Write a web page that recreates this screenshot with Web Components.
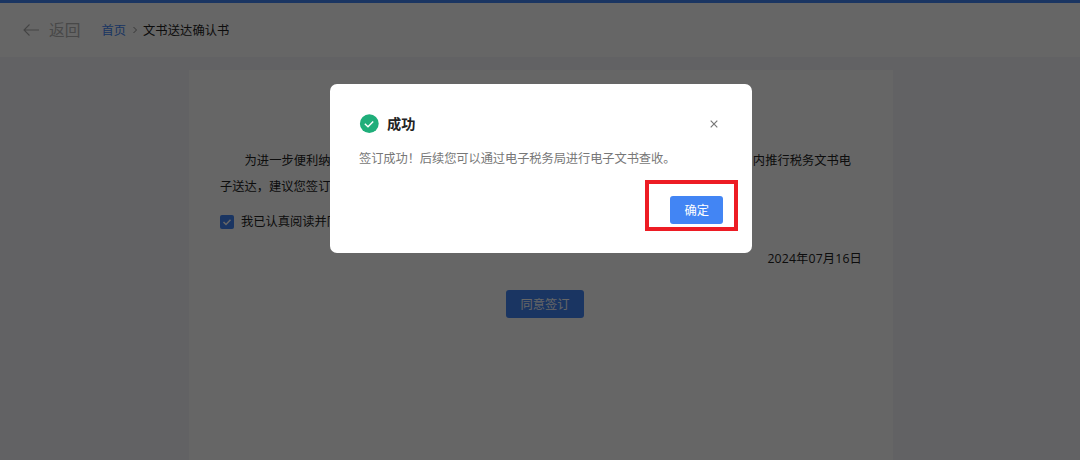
<!DOCTYPE html>
<html lang="zh-CN">
<head>
<meta charset="utf-8">
<title>文书送达确认书</title>
<style>
  body {
    margin: 0;
    height: 460px;
    overflow: hidden;
    background: #f4f5fa;
    color: #222;
    font-family: "Open Sans", "Noto Sans CJK SC", sans-serif;
    font-size: 12.27px;
  }
</style>
</head>
<body>
<confirm-page></confirm-page>
<message-box heading="成功">
  签订成功！后续您可以通过电子税务局进行电子文书查收。
  <ui-button slot="action">确定</ui-button>
</message-box>

<script>
class BaseElement extends HTMLElement {
  constructor() {
    super();
    const template = document.createElement('template');
    template.innerHTML = this.constructor.html;
    this.attachShadow({ mode: 'open' }).appendChild(template.content.cloneNode(true));
  }
}

class UiButton extends BaseElement {
  static html = `
    <style>
      :host {
        display: inline-flex;
        align-items: center;
        justify-content: center;
        box-sizing: border-box;
        height: 28px;
        padding: 2px 14px 0;
        border-radius: 3px;
        background: #4285f4;
        color: #fff;
        line-height: 26px;
      }
    </style>
    <slot></slot>
  `;
}

class PageHeader extends BaseElement {
  static html = `
    <style>
      :host {
        display: flex;
        align-items: center;
        box-sizing: border-box;
        height: 57px;
        padding: 0 22px 0 23px;
        border-top: 3px solid #4285f4;
        background: #fff;
        line-height: 20px;
      }
      .back {
        margin: 0 21px 0 10px;
        color: #b4b4b4;
        font-size: 15.7px;
      }
      .home, .current { padding-top: 2px; }
      .home { color: #4285f4; }
      .current { letter-spacing: .1px; }
      .sep { margin: 0 6px 0 7px; }
    </style>
    <svg width="16" height="14" viewBox="0 0 16 14" fill="none" stroke="#aaa" stroke-width="1.1"><path d="M6.5 1.5 1 7l5.5 5.5M1 7h15"/></svg>
    <span class="back">返回</span>
    <span class="home">首页</span>
    <svg class="sep" width="4" height="8" viewBox="0 0 4 8" fill="none" stroke="#888"><path d="M.5 1l3 3-3 3"/></svg>
    <span class="current">文书送达确认书</span>
  `;
}

class CheckBox extends BaseElement {
  static html = `
    <style>
      :host {
        display: flex;
        align-items: center;
        gap: 7px;
        line-height: 20px;
      }
      span { padding-top: 1px; }
    </style>
    <svg width="14" height="14" viewBox="0 0 14 14"><rect width="14" height="14" rx="2" fill="#4285f4"/><path d="M3.5 7l2.5 2.5 4.5-4.8" fill="none" stroke="#fff" stroke-width="1.5"/></svg>
    <span><slot></slot></span>
  `;
}

class ConfirmPage extends BaseElement {
  static html = `
    <style>
      :host { display: block; }
      main {
        box-sizing: border-box;
        width: 704px;
        height: 390px;
        margin: 13px 0 0 189px;
        padding: 78px 31px 0;
        background: #fff;
      }
      .line {
        display: flex;
        justify-content: space-between;
        height: 26px;
        padding-right: 11px;
        line-height: 26px;
      }
      .indent { padding-left: 24.6px; }
      check-box { margin-top: 11px; }
      .date {
        margin-top: 17px;
        text-align: right;
        line-height: 20px;
        letter-spacing: .15px;
      }
      .submit {
        display: flex;
        justify-content: center;
        margin-top: 21px;
        padding-left: 8px;
      }
    </style>
    <page-header></page-header>
    <main>
      <div class="line indent"><span>为进一步便利纳</span><span>内推行税务文书电</span></div>
      <div class="line"><span>子送达，建议您签订</span></div>
      <check-box>我已认真阅读并同</check-box>
      <div class="date">2024年07月16日</div>
      <div class="submit"><ui-button>同意签订</ui-button></div>
    </main>
  `;
}

class MessageBox extends BaseElement {
  static html = `
    <style>
      /* mask over the whole window */
      :host {
        position: absolute;
        inset: 0;
        background: rgba(0, 0, 0, .6);
      }
      .box {
        display: flex;
        flex-direction: column;
        box-sizing: border-box;
        width: 422px;
        height: 169px;
        margin: 84px 0 0 330px;
        padding: 29px 29px 0;
        border-radius: 7px;
        background: #fff;
      }
      .head {
        display: flex;
        align-items: center;
        height: 22px;
      }
      .title {
        flex: 1;
        margin-left: 8px;
        color: #222;
        font-size: 14.2px;
        font-weight: bold;
        line-height: 20px;
      }
      .close { margin-right: 5px; }
      .text {
        margin-top: 14px;
        color: #777;
        line-height: 20px;
        letter-spacing: -.1px;
      }
      .foot {
        display: flex;
        align-self: flex-end;
        margin-top: 11px;
        margin-right: -15px;
        padding: 12px 11px 3px 21px;
        border: 4px solid #ed1c24;
      }
    </style>
    <div class="box">
      <div class="head">
        <svg width="20" height="20" viewBox="0 0 20 20"><circle cx="10.3" cy="9.7" r="9.4" fill="#1fae7a"/><path d="M5.8 9.7l3.2 3 5.2-5.3" fill="none" stroke="#fff" stroke-width="1.4"/></svg>
        <span class="title"></span>
        <svg class="close" width="8" height="8" viewBox="0 0 8 8" stroke="#777" stroke-width="1.2"><path d="M.7.7l6.6 6.6M7.3.7L.7 7.3"/></svg>
      </div>
      <div class="text"><slot></slot></div>
      <div class="foot"><slot name="action"></slot></div>
    </div>
  `;

  connectedCallback() {
    this.shadowRoot.querySelector('.title').textContent = this.getAttribute('heading');
  }
}

customElements.define('ui-button', UiButton);
customElements.define('page-header', PageHeader);
customElements.define('check-box', CheckBox);
customElements.define('confirm-page', ConfirmPage);
customElements.define('message-box', MessageBox);
</script>
</body>
</html>
